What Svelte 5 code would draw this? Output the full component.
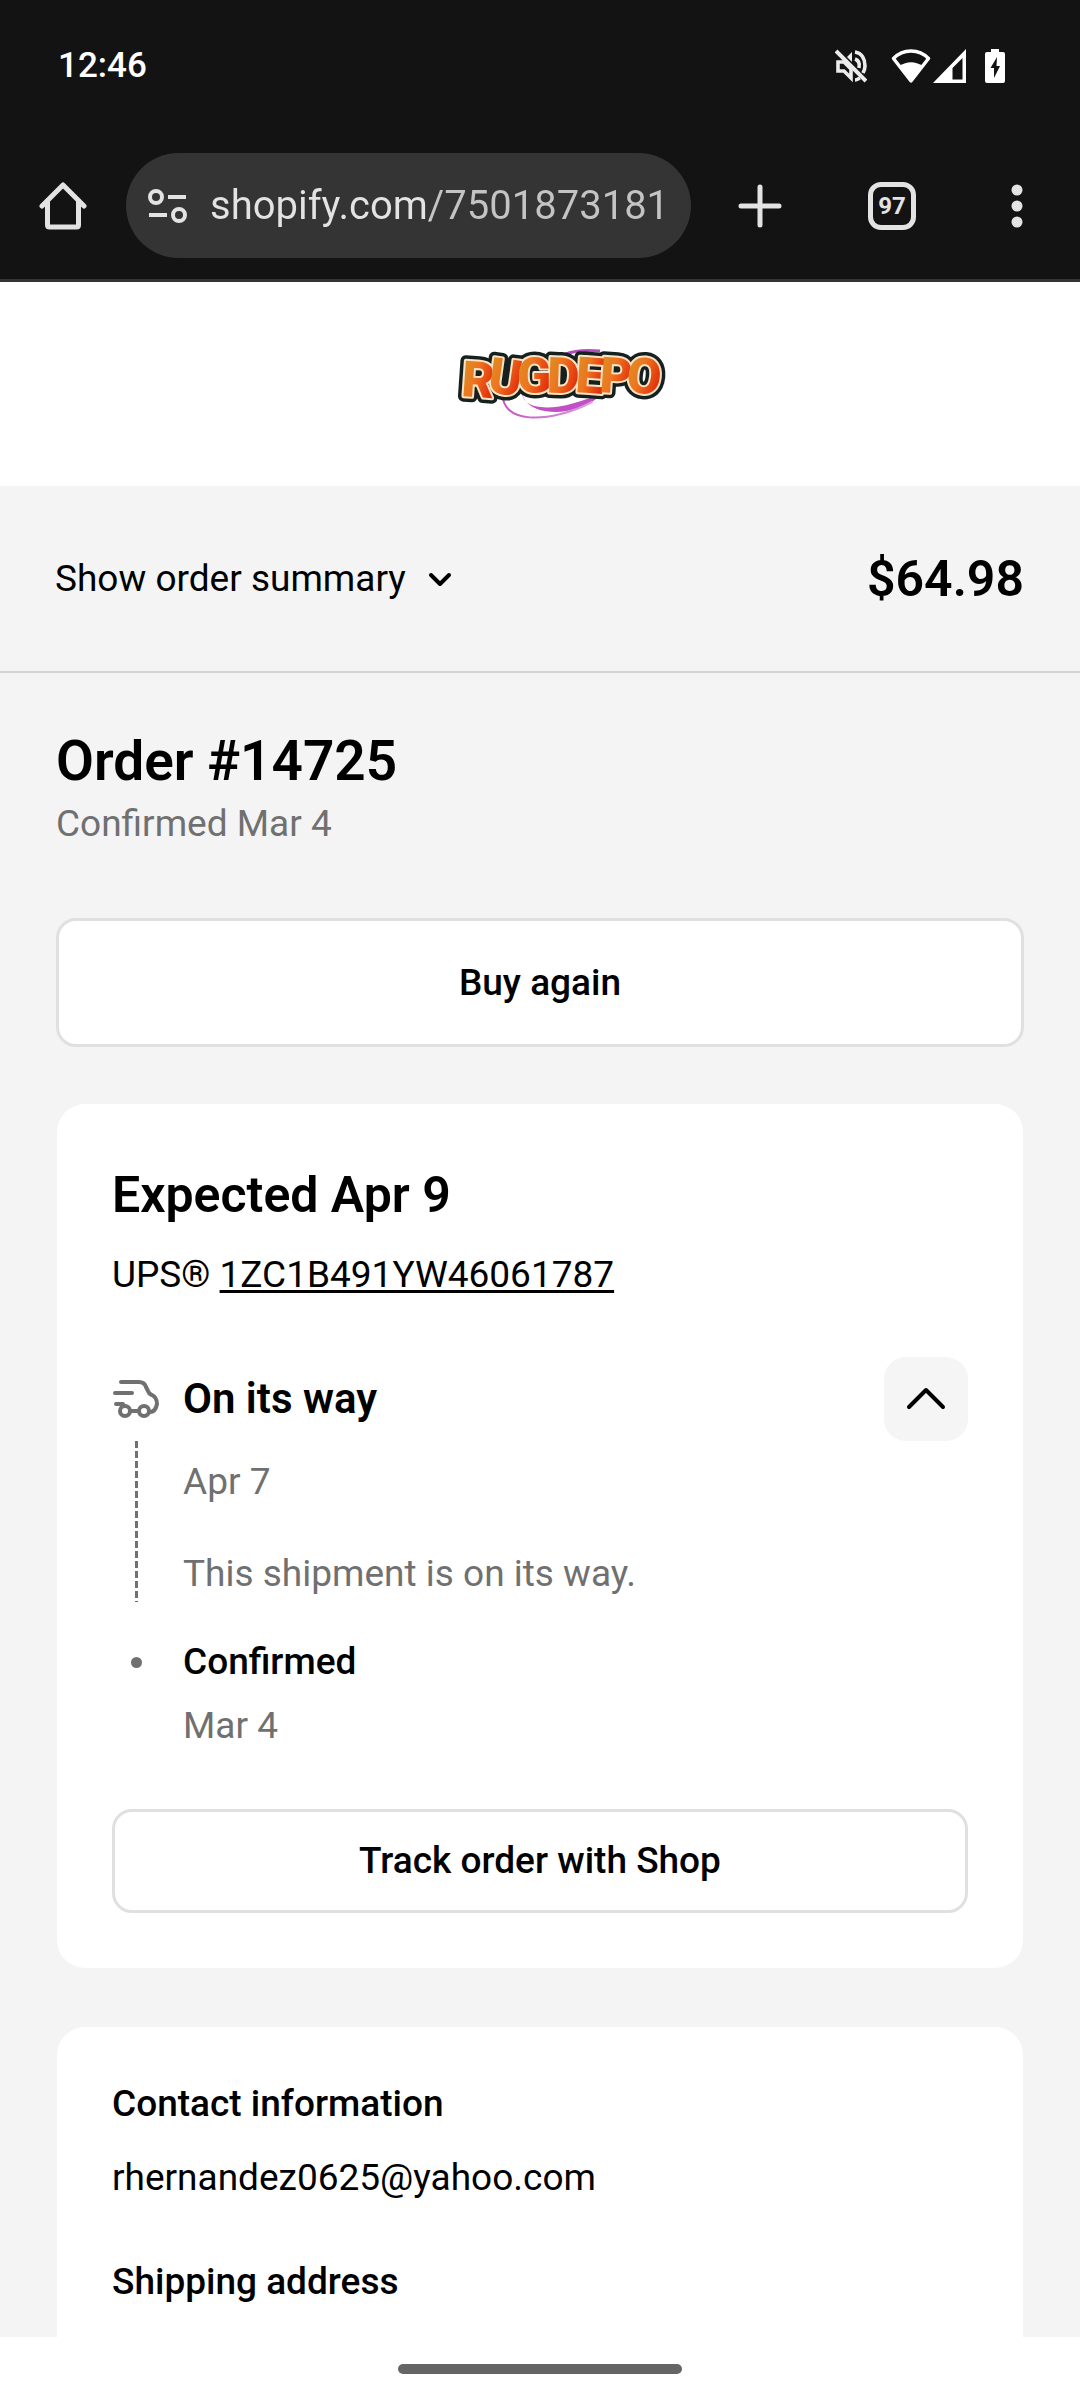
<script lang="ts">
	interface LogoLetter {
		char: string;
		x: number;
		y: number;
		tilt: number;
	}

	const order = {
		number: '14725',
		confirmed: 'Mar 4',
		total: '$64.98',
		expected: 'Apr 9',
		carrier: 'UPS®',
		tracking: '1ZC1B491YW46061787',
		email: 'rhernandez0625@yahoo.com'
	};

	const logo: LogoLetter[] = [
		{ char: 'R', x: 8, y: 51, tilt: 4 },
		{ char: 'U', x: 35, y: 48, tilt: 8 },
		{ char: 'G', x: 63, y: 47, tilt: 0 },
		{ char: 'D', x: 93, y: 47, tilt: 2 },
		{ char: 'E', x: 122, y: 47, tilt: 4 },
		{ char: 'P', x: 146, y: 47, tilt: 4 },
		{ char: 'O', x: 173, y: 47, tilt: 6 }
	];

	let url = $state('shopify.com/75018731810');
	let summaryOpen = $state(false);
	let detailsOpen = $state(true);
</script>

<div class="screen">
	<header class="chrome">
		<div class="status">
			<time>12:46</time>
			<div class="indicators">
				<svg class="mute" viewBox="0 0 32 34" fill="none" stroke="#ececec" stroke-width="3.6">
					<path d="M9 13H3v9h6l7 7V20L9 13Z" />
					<path d="m12 8 5-5v10Z" fill="#ececec" stroke="none" />
					<path d="M20 3c7 1 10 7 10 14 0 3-1 5-2 7" />
					<path d="M20 10c3 1 5 4 4 9" />
					<path d="M20 31c2 0 3-1 5-2" />
					<path d="M1 2 31 32" stroke-width="4" />
				</svg>
				<svg class="wifi" viewBox="0 0 40 34">
					<path d="M20 32 2.500 9.500C12-.500 28-.500 37.500 9.500Z" fill="none" stroke="#fff" stroke-width="3.400" stroke-linejoin="round" />
					<path d="M9 17c6-5 16-5 22 0L20 33Z" fill="#fff" />
				</svg>
				<svg class="signal" viewBox="0 0 34 34">
					<path fill="#fff" fill-rule="evenodd" d="M33 0v34H0Zm-3.500 9L19.500 19v11.500h10Z" />
				</svg>
				<svg class="battery" viewBox="0 0 20 34">
					<path fill="#fff" d="M6 0h8v3h4a2 2 0 0 1 2 2v27a2 2 0 0 1-2 2H2a2 2 0 0 1-2-2V5a2 2 0 0 1 2-2h4Z" />
					<path fill="#131313" d="M12 8 5.500 19H9v10l6-12h-3.500Z" />
				</svg>
			</div>
		</div>

		<div class="toolbar">
			<button class="icon-btn" aria-label="Home">
				<svg viewBox="0 0 48 48" fill="none" stroke="#e3e3e3" stroke-width="5" stroke-linecap="round" stroke-linejoin="round">
					<path d="M3 24 24 3l21 21" />
					<path d="M8.500 19v24q0 2 2 2h27q2 0 2-2V19" />
				</svg>
			</button>
			<div class="omnibox">
				<button class="site-info" aria-label="Site information">
					<svg viewBox="0 0 40 34" fill="none" stroke="#e3e3e3" stroke-width="4">
						<circle cx="8" cy="8" r="6" />
						<path d="M20 8h18M1 26h18" />
						<circle cx="31" cy="26" r="6" />
					</svg>
				</button>
				<input type="text" aria-label="Address" bind:value={url} />
			</div>
			<div class="actions">
				<button class="icon-btn" aria-label="New tab">
					<svg viewBox="0 0 48 48" stroke="#e3e3e3" stroke-width="5" stroke-linecap="round">
						<path d="M24 5v38M5 24h38" />
					</svg>
				</button>
				<button class="icon-btn tabs" aria-label="Open tabs">97</button>
				<button class="menu" aria-label="Menu">
					<svg viewBox="0 0 34 48" fill="#e3e3e3">
						<circle cx="17" cy="8" r="5.500" />
						<circle cx="17" cy="24" r="5.500" />
						<circle cx="17" cy="40" r="5.500" />
					</svg>
				</button>
			</div>
		</div>
	</header>

	<div class="brand">
		<svg viewBox="0 -8 224 92" role="img" aria-label="RUGDEPO">
			<defs>
				<linearGradient id="flame" x1="0" x2="1" y1="0" y2="0.400">
					<stop offset="0.100" stop-color="#dc9022" />
					<stop offset="0.500" stop-color="#ee7421" />
					<stop offset="1" stop-color="#e2320c" />
				</linearGradient>
				<linearGradient id="swoosh">
					<stop offset="0" stop-color="#c454c4" />
					<stop offset="1" stop-color="#d9a0dc" />
				</linearGradient>
			</defs>
			<path d="M68 44C66 66 104 68 152 45 120 76 68 70 68 44Z" fill="#c34fc6" />
			<path d="M49 44C44 79 96 78 138 56" fill="none" stroke="url(#swoosh)" stroke-width="2" stroke-linecap="round" />
			<path d="M112 8q12-5 34-3" fill="none" stroke="#b44cbd" stroke-width="3" />
			<g class="letters shadow">
				{#each logo as l}
					<text x={l.x} y={l.y} transform="rotate({l.tilt} {l.x + 14} {l.y - 18})">{l.char}</text>
				{/each}
			</g>
			<g class="letters rim">
				{#each logo as l}
					<text x={l.x} y={l.y} transform="rotate({l.tilt} {l.x + 14} {l.y - 18})">{l.char}</text>
				{/each}
			</g>
			<g class="letters face">
				{#each logo as l}
					<text x={l.x} y={l.y} transform="rotate({l.tilt} {l.x + 14} {l.y - 18})">{l.char}</text>
				{/each}
			</g>
		</svg>
	</div>

	<div class="summary">
		<button class="summary-toggle" aria-expanded={summaryOpen} onclick={() => (summaryOpen = !summaryOpen)}>
			Show order summary
			<svg viewBox="0 0 24 16" fill="none" stroke="#000" stroke-width="4" stroke-linecap="round" stroke-linejoin="round">
				<path d="m3 4 9 9 9-9" />
			</svg>
		</button>
		<strong class="total">{order.total}</strong>
	</div>

	<main>
		<h1>Order #{order.number}</h1>
		<p class="muted">Confirmed {order.confirmed}</p>

		<button class="outline buy">Buy again</button>

		<section class="card shipment">
			<h2>Expected {order.expected}</h2>
			<p class="carrier">{order.carrier} <a href="#tracking">{order.tracking}</a></p>

			<div class="step current">
				<svg class="truck" viewBox="0 0 48 40" fill="none" stroke="#707070" stroke-width="4" stroke-linecap="round" stroke-linejoin="round">
					<path d="M9 3h18c4 0 6 2 7 5l2 4c1 3 2 3 4 4 4 2 5 5 5 9-1 5-3 8-7 8" />
					<path d="M3 14h17M4 25h7M18 32h8" />
					<circle cx="13" cy="32" r="5" />
					<circle cx="32" cy="32" r="5" />
				</svg>
				<h3>On its way</h3>
				<button
					class="collapse"
					aria-label="Toggle shipment details"
					aria-expanded={detailsOpen}
					onclick={() => (detailsOpen = !detailsOpen)}
				>
					<svg viewBox="0 0 40 24" fill="none" stroke="#000" stroke-width="4" stroke-linecap="round" stroke-linejoin="round">
						<path d="M3 20 20 3l17 17" />
					</svg>
				</button>
			</div>

			{#if detailsOpen}
				<div class="step">
					<span class="line"></span>
					<div class="details muted">
						<p>Apr 7</p>
						<p>This shipment is on its way.</p>
					</div>
				</div>
				<div class="step confirmed">
					<span class="dot"></span>
					<h4>Confirmed</h4>
					<p class="muted">{order.confirmed}</p>
				</div>
			{/if}

			<button class="outline track">Track order with Shop</button>
		</section>

		<section class="card contact">
			<h4>Contact information</h4>
			<p>{order.email}</p>
			<h4>Shipping address</h4>
		</section>
	</main>

	<footer class="gesture-bar"><span></span></footer>
</div>

<style>
	:global(body) {
		margin: 0;
		background: #fff;
	}

	.screen {
		display: flex;
		flex-direction: column;
		min-height: 100vh;
		font-family: Roboto, 'Liberation Sans', sans-serif;
		font-size: 37px;
		line-height: 56px;
		color: #000;
	}

	h1, h2, h3, h4, p { margin: 0; }
	h1, h2, h3, h4 { font-weight: 600; }
	h4 { font-size: 37px; font-weight: 500; }
	svg { display: block; flex-shrink: 0; }

	button {
		padding: 0;
		border: 0;
		background: none;
		color: inherit;
		font: inherit;
	}

	.muted { color: #707070; }

	/* browser and system bars */
	.chrome {
		background: #131313;
		border-bottom: 3px solid #343434;
		color: #e3e3e3;
	}

	.status {
		display: flex;
		align-items: center;
		justify-content: space-between;
		height: 132px;
		padding: 0 75px 0 58px;
	}

	.status time {
		font-size: 35px;
		font-weight: 500;
		color: #fff;
	}

	.indicators { display: flex; align-items: center; }
	.mute { width: 32px; height: 34px; margin-right: 24px; }
	.wifi { width: 40px; height: 34px; margin-right: 2px; }
	.signal { width: 34px; height: 34px; margin-right: 18px; }
	.battery { width: 20px; height: 34px; }

	.toolbar {
		display: flex;
		align-items: center;
		height: 147px;
		padding: 0 46px 0 39px;
	}

	.icon-btn,
	.icon-btn svg {
		width: 48px;
		height: 48px;
	}

	.omnibox {
		display: flex;
		align-items: center;
		flex: 1;
		gap: 22px;
		min-width: 0;
		height: 105px;
		box-sizing: border-box;
		margin: 0 45px 0 39px;
		padding: 0 22px;
		border-radius: 53px;
		background: #343434;
	}

	.site-info svg { width: 40px; height: 34px; }

	/* the path after the host is a shade dimmer */
	.omnibox input {
		flex: 1;
		min-width: 0;
		padding: 0;
		border: 0;
		outline: 0;
		background: linear-gradient(90deg, #e3e3e3 220px, #c4c4c4 220px);
		background-clip: text;
		color: transparent;
		font: inherit;
		font-size: 40px;
		line-height: 56px;
	}

	.actions { display: flex; align-items: center; gap: 84px; }

	.tabs {
		box-sizing: border-box;
		border: 5px solid #e3e3e3;
		border-radius: 13px;
		font-size: 24px;
		font-weight: 700;
		line-height: 38px;
	}

	.menu svg { width: 34px; height: 48px; }

	/* store header */
	.brand {
		display: flex;
		justify-content: center;
		padding: 56px 0;
		padding-left: 52px;
	}

	.brand svg { width: 224px; height: 92px; }

	.letters {
		font-family: Roboto, sans-serif;
		font-size: 50px;
		font-weight: 900;
		stroke-linejoin: round;
	}

	.shadow { fill: #15201f; stroke: #15201f; stroke-width: 11px; }
	.rim { fill: #fbe3c4; stroke: #fbe3c4; stroke-width: 4px; }
	.face { fill: url(#flame); }

	.summary {
		display: flex;
		align-items: center;
		justify-content: space-between;
		height: 185px;
		padding: 0 56px 0 55px;
		background: #f4f4f4;
		border-bottom: 2px solid #d4d4d4;
	}

	.summary-toggle { display: flex; align-items: center; gap: 22px; }
	.summary-toggle svg { width: 24px; height: 16px; }
	.total { font-size: 50px; font-weight: 600; }

	/* order status */
	main {
		display: flex;
		flex: 1;
		flex-direction: column;
		padding: 55px 56px 0;
		background: #f4f4f4;
	}

	h1 { margin-bottom: 2px; font-size: 55px; line-height: 66px; }
	h2 { font-size: 50px; line-height: 60px; }
	h3 { font-size: 42px; }

	.outline {
		box-sizing: border-box;
		width: 100%;
		border: 3px solid #e0e0e0;
		border-radius: 20px;
		background: #fff;
		font-weight: 500;
	}

	.buy { height: 129px; margin: 66px 0 57px; }

	.card {
		margin: 0 1px;
		padding: 0 55px;
		border-radius: 28px;
		background: #fff;
	}

	.shipment { padding-top: 61px; padding-bottom: 55px; }
	.carrier { margin: 22px 0 54px; }

	.carrier a {
		color: inherit;
		text-decoration-thickness: 3px;
		text-underline-offset: 3px;
	}

	.step {
		display: grid;
		grid-template-columns: 48px 1fr auto;
		column-gap: 23px;
		align-items: center;
	}

	.truck { width: 48px; height: 40px; }

	.collapse {
		display: grid;
		place-items: center;
		width: 84px;
		height: 84px;
		border-radius: 22px;
		background: #f5f5f5;
	}

	.collapse svg { width: 40px; height: 24px; }

	.line {
		justify-self: center;
		width: 3px;
		height: 100%;
		background: repeating-linear-gradient(#707070 0 7px, transparent 7px 10px);
	}

	.details {
		display: grid;
		gap: 36px;
		padding-top: 13px;
	}

	.confirmed { row-gap: 8px; margin: 32px 0 55px; }
	.confirmed .muted { grid-column: 2; }

	.dot {
		justify-self: center;
		width: 11px;
		height: 11px;
		border-radius: 50%;
		background: #707070;
	}

	.track { height: 104px; }

	.contact {
		flex: 1;
		margin-top: 59px;
		padding-top: 49px;
		padding-bottom: 27px;
		border-radius: 28px 28px 0 0;
	}

	.contact p { margin: 18px 0 48px; }

	.gesture-bar {
		display: flex;
		align-items: center;
		justify-content: center;
		height: 63px;
		background: #fff;
	}

	.gesture-bar span {
		width: 284px;
		height: 10px;
		border-radius: 5px;
		background: #656565;
	}
</style>
